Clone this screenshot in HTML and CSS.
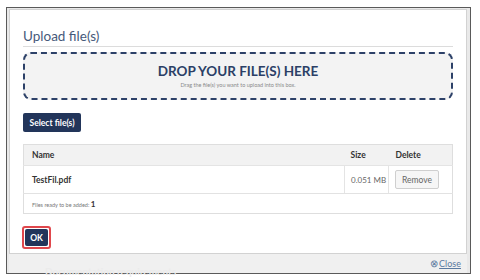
FILE: index.html
```html
<!DOCTYPE html>
<html>
<head>
<meta charset="utf-8">
<link rel="stylesheet" href="styles.css">
</head>
<body>
<div class="frame">
  <div class="backdrop">
    <div class="panel">
      <h2 class="title">Upload file(s)</h2>
      <div class="drop">
        <div class="drop-head">DROP YOUR FILE(S) HERE</div>
        <div class="drop-sub">Drag the file(s) you want to upload into this box.</div>
      </div>
      <button class="btn primary select">Select file(s)</button>
      <table class="files">
        <thead>
          <tr><th class="c-name">Name</th><th class="c-size">Size</th><th class="c-del">Delete</th></tr>
        </thead>
        <tbody>
          <tr class="row"><td class="fname">TestFil.pdf</td><td class="fsize">0.051 MB</td><td class="fdel"><button class="btn remove">Remove</button></td></tr>
          <tr class="foot"><td colspan="3">Files ready to be added: <span class="count">1</span></td></tr>
        </tbody>
      </table>
      <div class="ok-wrap"><button class="btn primary ok">OK</button></div>
    </div>
    <div class="footer">
      <span class="ghost">Documentation requirements</span>
      <a class="close" href="#"><span class="x">&#8855;</span><u>Close</u></a>
    </div>
  </div>
</div>
</body>
</html>
```
FILE: styles.css
```css
* { box-sizing: border-box; }
html, body { margin: 0; padding: 0; background: #fff; }
body { font-family: Lato, "Open Sans", sans-serif; width: 480px; height: 280px; overflow: hidden; padding: 7px 0 0 6px; }
.frame { width: 465px; height: 267px; border: 1px solid #5a5a5a; background: #e9e9e9; padding: 1px 3px 0 2px; }
.backdrop { display: flex; flex-direction: column; height: 100%; }
.panel { background: #fff; border: 1px solid #d2d2d2; height: 245px; padding: 17px 13px 0 13px; display: flex; flex-direction: column; align-items: flex-start; }
.footer { flex: 1; background: #f0f0f0; display: flex; align-items: flex-end; justify-content: space-between; padding: 0 6px 3px 36px; }
.ghost { color: #ebebeb; font-size: 10px; font-weight: 700; line-height: 12px; margin-bottom: -7px; }
.close { color: #5b7aa0; font-size: 9px; text-decoration: none; line-height: 12px; }
.close .x { font-size: 10px; margin-right: 1px; }
.title { margin: 0; font-weight: 400; font-size: 13.5px; color: #46597a; line-height: 18px; width: 100%; border-bottom: 1px solid #dcdcdc; padding-bottom: 1px; }
.drop { width: 430px; height: 48px; margin-top: 5px; border: 2px dashed #2d4168; border-radius: 8px; background: #f3f3f3; display: flex; flex-direction: column; align-items: center; justify-content: center; }
.drop-head { font-weight: 700; font-size: 13.5px; color: #2b3f66; line-height: 16px; }
.drop-sub { font-size: 5.5px; color: #8a8a8a; line-height: 8px; margin-top: 2px; }
.btn { font-family: inherit; cursor: pointer; }
.primary { background: #22355a; color: #fff; border: 0; border-radius: 2px; font-size: 8.5px; font-weight: 700; }
.select { margin-top: 13px; width: 58px; height: 19px; padding: 0; }
.files { margin-top: 12px; width: 430px; border-collapse: collapse; border: 1px solid #dedede; font-size: 8.5px; color: #333; table-layout: fixed; }
.files th { background: #f2f2f2; text-align: left; font-weight: 700; height: 21px; padding: 0 8px; border-bottom: 1px solid #e4e4e4; }
.files td { padding: 0 8px; }
.files th.c-size { width: 44px; padding: 0 6px; }
.files th.c-del { width: 64px; padding: 0 7px; }
.row td { height: 28px; border-bottom: 1px solid #e2e2e2; }
.fname { font-weight: 700; }
.files td.fsize { color: #666; font-size: 8px; white-space: nowrap; padding: 0 0 0 6px; border-left: 1px solid #e4e4e4; border-right: 1px solid #e4e4e4; }
.files td.fdel { padding: 0 6px; }
.remove { background: #f6f6f6; border: 1px solid #cfcfcf; border-radius: 2px; color: #666; font-size: 8.5px; width: 44px; height: 19px; padding: 0; }
.foot td { height: 20px; font-size: 5.5px; color: #777; }
.foot .count { font-size: 8px; font-weight: 700; color: #333; }
.ok-wrap { margin-top: 12px; margin-left: -1px; border: 2px solid #e0474c; border-radius: 3px; padding: 1px; background: #fff; }
.ok { display: block; width: 23px; height: 17px; padding: 0; font-size: 8.5px; }
```
